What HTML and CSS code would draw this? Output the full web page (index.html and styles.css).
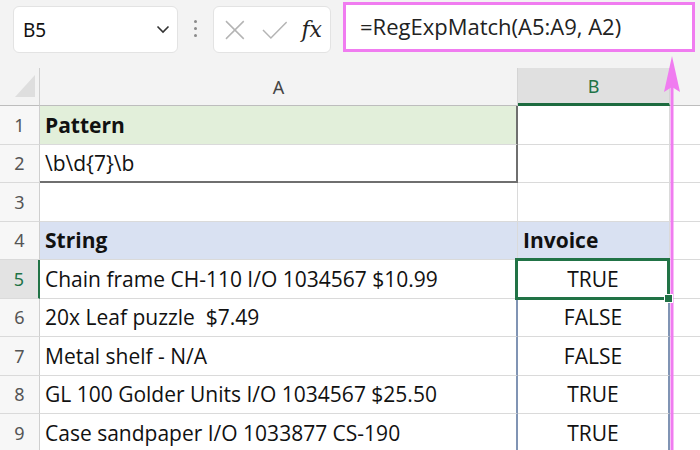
FILE: index.html
```html
<!DOCTYPE html>
<html>

<head>
	<meta charset="utf-8">
	<link rel="stylesheet" href="styles.css">
</head>

<body>

	<div class="toolbar">
		<div class="namebox">
			<span class="namebox-ref">B5</span>
			<svg class="chevron" width="14" height="9" viewBox="0 0 14 9">
				<path d="M1.5 1.5 L7 7 L12.5 1.5" fill="none" stroke="#333" stroke-width="1.6" />
			</svg>
		</div>
		<div class="dots"><span></span><span></span><span></span></div>
		<div class="fxbox">
			<svg width="22" height="22" viewBox="0 0 22 22">
				<path d="M2 2 L20 20 M20 2 L2 20" stroke="#b4b4b4" stroke-width="1.5" />
			</svg>
			<svg width="26" height="22" viewBox="0 0 26 22">
				<path d="M1 11 L9 19 L25 3" fill="none" stroke="#b4b4b4" stroke-width="1.5" />
			</svg>
			<span class="fx">fx</span>
		</div>
		<div class="formula">=RegExpMatch(A5:A9, A2)</div>
	</div>

	<div class="sheet">
		<!-- column headers -->
		<div class="corner"><span class="corner-tri"></span></div>
		<div class="colhead">A</div>
		<div class="colhead colhead-active">B</div>
		<div class="colhead colhead-rest"></div>

		<!-- row 1 -->
		<div class="rowhead">1</div>
		<div class="cell cell-pattern cell-bold">Pattern</div>
		<div class="cell"></div>
		<div class="cell cell-rest"></div>

		<!-- row 2 -->
		<div class="rowhead">2</div>
		<div class="cell cell-pattern-bottom">\b\d{7}\b</div>
		<div class="cell"></div>
		<div class="cell cell-rest"></div>

		<!-- row 3 -->
		<div class="rowhead">3</div>
		<div class="cell"></div>
		<div class="cell"></div>
		<div class="cell cell-rest"></div>

		<!-- row 4 -->
		<div class="rowhead">4</div>
		<div class="cell cell-head cell-bold">String</div>
		<div class="cell cell-head cell-bold">Invoice</div>
		<div class="cell cell-rest"></div>

		<!-- row 5 -->
		<div class="rowhead rowhead-active">5</div>
		<div class="cell cell-spill-left">Chain frame CH-110 I/O 1034567 $10.99</div>
		<div class="cell cell-result cell-spill cell-selected">TRUE</div>
		<div class="cell cell-rest"></div>

		<!-- row 6 -->
		<div class="rowhead">6</div>
		<div class="cell cell-spill-left">20x Leaf puzzle&nbsp; $7.49</div>
		<div class="cell cell-result cell-spill">FALSE</div>
		<div class="cell cell-rest"></div>

		<!-- row 7 -->
		<div class="rowhead">7</div>
		<div class="cell cell-spill-left">Metal shelf - N/A</div>
		<div class="cell cell-result cell-spill">FALSE</div>
		<div class="cell cell-rest"></div>

		<!-- row 8 -->
		<div class="rowhead">8</div>
		<div class="cell cell-spill-left">GL 100 Golder Units I/O 1034567 $25.50</div>
		<div class="cell cell-result cell-spill">TRUE</div>
		<div class="cell cell-rest"></div>

		<!-- row 9 -->
		<div class="rowhead">9</div>
		<div class="cell cell-spill-left">Case sandpaper I/O 1033877 CS-190</div>
		<div class="cell cell-result cell-spill">TRUE</div>
		<div class="cell cell-rest"></div>
	</div>

	<!-- callout arrow pointing at the formula bar -->
	<svg class="arrow" width="22" height="400" viewBox="0 0 22 400">
		<path d="M11 30 L11 400" stroke="#f07cf0" stroke-width="3" />
		<path d="M11 0 L19 36 L11 31 L3 36 Z" fill="#f07cf0" />
	</svg>

</body>

</html>
```

FILE: styles.css
```css
body {
	margin: 0;
	width: 700px;
	height: 450px;
	overflow: hidden;
	background-color: #f3f3f3;
	font-family: "Open Sans", sans-serif;
	color: #111;
	position: relative;
}

/* toolbar with name box and formula bar */

.toolbar {
	display: flex;
	align-items: flex-start;
	height: 68px;
	padding: 2px 5px 0 13px;
	box-sizing: border-box;
}

.namebox {
	display: flex;
	align-items: center;
	justify-content: space-between;
	width: 165px;
	height: 47px;
	margin-top: 4px;
	padding: 0 7px 0 9px;
	box-sizing: border-box;
	background: #fff;
	border: 1px solid #e3e3e3;
	border-radius: 6px;
	font-family: "Noto Sans", sans-serif;
	font-size: 19px;
}

.dots {
	display: flex;
	flex-direction: column;
	gap: 4px;
	margin: 18px 16px 0 16px;
}

.dots span {
	display: block;
	width: 3px;
	height: 3px;
	border-radius: 50%;
	background: #8a8a8a;
}

.fxbox {
	display: flex;
	align-items: center;
	gap: 16px;
	width: 118px;
	height: 47px;
	margin-top: 4px;
	padding: 0 8px 0 10px;
	box-sizing: border-box;
	background: #fff;
	border: 1px solid #e3e3e3;
	border-radius: 6px;
}

.fx {
	font-family: "DejaVu Serif", "Liberation Serif", serif;
	font-style: italic;
	font-size: 22px;
	color: #222;
	margin-left: -2px;
}

.formula {
	flex: 1;
	height: 50px;
	margin-left: 12px;
	padding-left: 14px;
	box-sizing: border-box;
	background: #fff;
	border: 3px solid #f07cf0;
	font-size: 22px;
	line-height: 43px;
	color: #222;
}

/* sheet grid */

.sheet {
	display: grid;
	grid-template-columns: 40px 478px 152px 30px;
	grid-template-rows: 38px repeat(9, 38.5px);
	font-size: 21px;
}

.corner {
	position: relative;
	background: #f3f3f3;
	border-right: 1px solid #cfcfcf;
	border-bottom: 1px solid #bdbdbd;
}

.corner-tri {
	position: absolute;
	left: 15px;
	bottom: 8px;
	width: 0;
	height: 0;
	border-left: 20px solid transparent;
	border-bottom: 22px solid #dedede;
}

.colhead {
	display: flex;
	align-items: center;
	justify-content: center;
	background: #f3f3f3;
	border-right: 1px solid #d4d4d4;
	border-bottom: 1px solid #bdbdbd;
	font-family: "Noto Sans", sans-serif;
	font-size: 18px;
	color: #444;
}

.colhead-active {
	background: #e0e0e0;
	color: #217346;
	border-bottom: 3px solid #1d6b3f;
}

.colhead-rest {
	border-right: none;
}

.rowhead {
	display: flex;
	align-items: center;
	justify-content: center;
	background: #f7f7f7;
	border-right: 1px solid #cfcfcf;
	border-bottom: 1px solid #dadada;
	font-family: "Noto Sans", sans-serif;
	font-size: 18px;
	color: #555;
}

.rowhead-active {
	background: #e3e3e3;
	color: #217346;
	border-right: 2px solid #217346;
}

.cell {
	display: flex;
	align-items: center;
	padding-left: 5px;
	background: #fff;
	border-right: 1px solid #dadada;
	border-bottom: 1px solid #dadada;
	white-space: nowrap;
	overflow: visible;
}

.cell-rest {
	border-right: none;
}

.cell-bold {
	font-weight: 700;
}

.cell-pattern {
	background: #e2efda;
	border-right: 2px solid #6f6f6f;
}

.cell-pattern-bottom {
	border-right: 2px solid #6f6f6f;
	border-bottom: 2px solid #6f6f6f;
}

.cell-head {
	background: #d9e1f2;
}

.cell-result {
	justify-content: center;
	padding-left: 0;
}

.cell-spill {
	border-right: 2px solid #8094b4;
}

.cell-spill-left {
	border-right: 2px solid #8094b4;
}

.cell-selected {
	position: relative;
}

.cell-selected::after {
	content: "";
	position: absolute;
	left: -3px;
	top: -2px;
	right: -2px;
	bottom: -2px;
	border: 3px solid #217346;
}

.cell-selected::before {
	content: "";
	position: absolute;
	right: -5px;
	bottom: -5px;
	width: 7px;
	height: 7px;
	background: #217346;
	border: 1px solid #fff;
	z-index: 1;
}

.arrow {
	position: absolute;
	left: 661px;
	top: 56px;
}
```
